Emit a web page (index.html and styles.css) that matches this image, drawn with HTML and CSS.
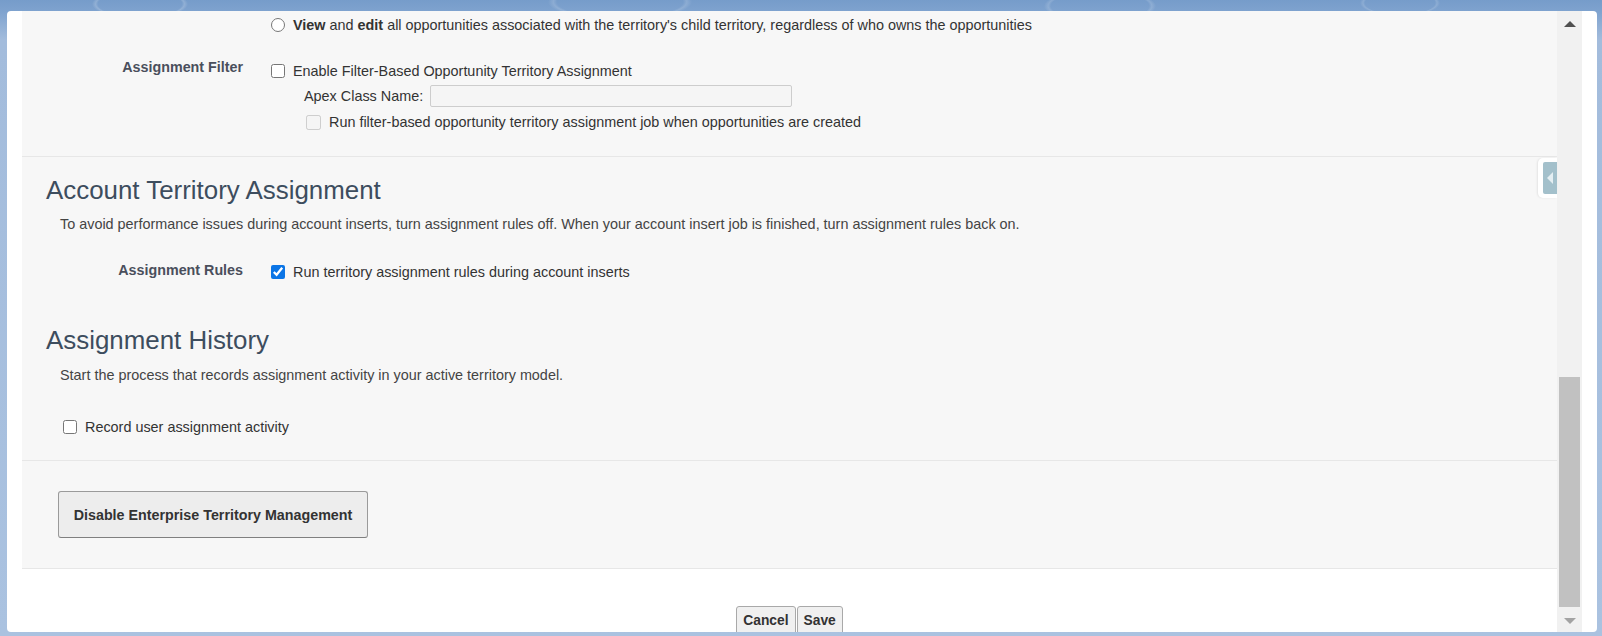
FILE: index.html
```html
<!DOCTYPE html>
<html lang="en">
<head>
<meta charset="utf-8">
<title>Territory Settings</title>
<link rel="stylesheet" href="styles.css">
</head>
<body>
<div class="panel">
  <div class="scroller">
    <div class="content">
      <div class="sec sec-top">
        <div class="row row-radio">
          <div class="label"></div>
          <div class="field">
            <label class="opt"><input type="radio" name="access"><span><b>View</b> and <b>edit</b> all opportunities associated with the territory's child territory, regardless of who owns the opportunities</span></label>
          </div>
        </div>
        <div class="row row-filter">
          <div class="label lbl-filter">Assignment Filter</div>
          <div class="field">
            <label class="opt"><input type="checkbox"><span>Enable Filter-Based Opportunity Territory Assignment</span></label>
            <div class="apex"><span class="apex-lbl">Apex Class Name:</span><span class="apex-input"></span></div>
            <label class="opt opt-disabled"><input type="checkbox" disabled><span>Run filter-based opportunity territory assignment job when opportunities are created</span></label>
          </div>
        </div>
      </div>

      <div class="sec sec-acc">
        <h2 class="h">Account Territory Assignment</h2>
        <p class="desc desc-acc">To avoid performance issues during account inserts, turn assignment rules off. When your account insert job is finished, turn assignment rules back on.</p>
        <div class="row row-rules">
          <div class="label lbl-rules">Assignment Rules</div>
          <div class="field">
            <label class="opt"><input type="checkbox" checked><span>Run territory assignment rules during account inserts</span></label>
          </div>
        </div>
        <h2 class="h h-hist">Assignment History</h2>
        <p class="desc desc-hist">Start the process that records assignment activity in your active territory model.</p>
        <label class="opt opt-record"><input type="checkbox"><span>Record user assignment activity</span></label>
      </div>

      <div class="sec sec-btn">
        <button class="btn-big" type="button">Disable Enterprise Territory Management</button>
      </div>

      <div class="footer">
        <button class="btn-sm" type="button">Cancel</button>
        <button class="btn-sm" type="button">Save</button>
      </div>
    </div>

    <div class="scrollbar">
      <div class="sb-btn"><span class="arr-up"></span></div>
      <div class="sb-space"></div>
      <div class="sb-thumb"></div>
      <div class="sb-btn"><span class="arr-down"></span></div>
    </div>

    <div class="handle"><div class="handle-in"><span class="handle-tri"></span></div></div>
  </div>
</div>
</body>
</html>
```

FILE: styles.css
```css
* { box-sizing: border-box; }

html, body {
  margin: 0;
  height: 100%;
}

body {
  padding: 11px 5px 4px 7px;
  background-color: #a9c1df;
  background-image:
    radial-gradient(ellipse 60px 18px at 140px 4px, transparent 70%, rgba(255,255,255,0.18) 74%, transparent 80%),
    radial-gradient(ellipse 90px 22px at 620px 2px, transparent 70%, rgba(255,255,255,0.15) 74%, transparent 80%),
    radial-gradient(ellipse 70px 20px at 1100px 6px, transparent 70%, rgba(255,255,255,0.15) 74%, transparent 80%),
    radial-gradient(ellipse 50px 16px at 1400px 3px, transparent 70%, rgba(255,255,255,0.15) 74%, transparent 80%),
    linear-gradient(180deg, #769cca 0px, #7fa3cf 12px, #a3bcdc 40px, #aac2e0 100%);
  font-family: Arial, "Liberation Sans", Helvetica, sans-serif;
  font-size: 14.4px;
  color: #333;
  overflow: hidden;
}

.panel {
  width: 1590px;
  height: 621px;
  background: #fff;
  border-radius: 4px;
  padding: 0 15px;
  overflow: hidden;
}

.scroller {
  position: relative;
  display: flex;
  height: 100%;
}

.content {
  flex: 1;
  height: 100%;
  overflow: hidden;
  background: #fff;
}

.sec {
  background: #f7f7f7;
  border-bottom: 1px solid #e7e7e7;
}

.sec-top {
  padding: 5px 0 25px;
}

.row {
  display: flex;
  align-items: flex-start;
}

.label {
  width: 221px;
  flex: none;
  text-align: right;
  font-weight: bold;
  font-size: 14.3px;
  color: #4a4f5c;
  line-height: 18px;
}

.field {
  margin-left: 28px;
}

.opt {
  display: flex;
  align-items: center;
  height: 18px;
  line-height: 18px;
  white-space: nowrap;
}

.opt input {
  margin: 0 8px 0 0;
  width: 14px;
  height: 14px;
  flex: none;
  accent-color: #0b75e6;
}

.opt b { font-weight: bold; color: #333; }

.row-filter { margin-top: 28px; }
.lbl-filter { margin-top: -4px; }

.apex {
  display: flex;
  align-items: center;
  height: 22px;
  margin: 5px 0 6px 33px;
}

.apex-lbl {
  width: 126px;
  flex: none;
  line-height: 18px;
}

.apex-input {
  width: 362px;
  height: 22px;
  border: 1px solid #cdcdcd;
  border-radius: 2px;
  background: #f5f5f5;
}

.opt-disabled {
  margin-left: 35px;
}

.opt-disabled input {
  width: 15px;
  height: 15px;
  margin-right: 8px;
}

.sec-acc {
  padding: 18px 0 24px;
}

.h {
  margin: 0 0 0 24px;
  font-size: 25.9px;
  line-height: 30px;
  font-weight: normal;
  color: #3d4d5e;
}

.desc {
  margin: 10px 0 0 38px;
  line-height: 18px;
  color: #444;
}

.row-rules { margin-top: 30px; }
.lbl-rules { margin-top: -2px; }

.h-hist { margin-top: 44px; }
.desc-hist { margin-top: 11px; }

.opt-record {
  margin: 34px 0 0 41px;
}

.opt-record input { margin-right: 8px; }

.sec-btn {
  padding: 30px 0 30px 36px;
}

.btn-big {
  display: block;
  width: 310px;
  height: 47px;
  padding: 0;
  font-family: inherit;
  font-size: 14.3px;
  font-weight: bold;
  color: #333;
  background: #ededed;
  border: 1px solid #9a9a9a;
  border-bottom-color: #7f7f7f;
  border-radius: 3px;
}

.footer {
  display: flex;
  justify-content: center;
  gap: 1px;
  padding-top: 37px;
}

.btn-sm {
  height: 30px;
  padding: 0 6px 2px;
  font-family: inherit;
  font-size: 13.8px;
  font-weight: bold;
  color: #333;
  background: #f0f0f0;
  border: 1px solid #a9a9a9;
  border-radius: 3px;
}

.scrollbar {
  width: 25px;
  flex: none;
  display: flex;
  flex-direction: column;
  background: #f1f1f1;
}

.sb-btn {
  height: 25px;
  flex: none;
  display: flex;
  align-items: center;
  justify-content: center;
}

.arr-up {
  width: 0;
  height: 0;
  border-left: 6px solid transparent;
  border-right: 6px solid transparent;
  border-bottom: 6px solid #505050;
}

.arr-down {
  width: 0;
  height: 0;
  border-left: 6px solid transparent;
  border-right: 6px solid transparent;
  border-top: 6px solid #a3a3a3;
  margin-top: 2px;
}

.sb-space { flex: 1; }

.sb-thumb {
  height: 230px;
  flex: none;
  margin: 0 2px 0 2px;
  background: #c1c1c1;
}

.handle {
  position: absolute;
  top: 147px;
  right: 25px;
  width: 19px;
  height: 40px;
  background: #fff;
  border-radius: 5px 0 0 5px;
  box-shadow: -1px 0 2px rgba(0,0,0,0.08);
  padding: 4px 0 4px 5px;
}

.handle-in {
  height: 100%;
  background: #a3c0cb;
  border-radius: 2px 0 0 2px;
  display: flex;
  align-items: center;
  padding-left: 4px;
}

.handle-tri {
  width: 0;
  height: 0;
  border-top: 6px solid transparent;
  border-bottom: 6px solid transparent;
  border-right: 6px solid #e4eef2;
}
```
